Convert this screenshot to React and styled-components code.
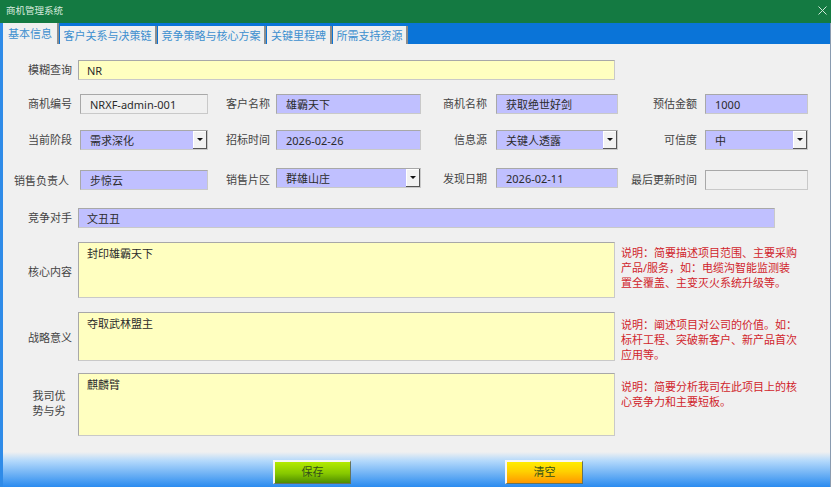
import React from 'react';
import styled, { createGlobalStyle } from 'styled-components';

const GlobalStyle = createGlobalStyle`
  html, body { margin: 0; padding: 0; }
  body {
    width: 831px;
    height: 487px;
    overflow: hidden;
    font-family: "Noto Sans", "Noto Sans CJK SC", sans-serif;
  }
`;

const Window = styled.div`
  width: 831px;
  height: 487px;
  display: flex;
  flex-direction: column;
  background: #f0f0f0;
`;

const TitleBar = styled.div`
  height: 23px;
  flex: none;
  display: flex;
  align-items: center;
  justify-content: space-between;
  padding: 0 3px 3px 6px;
  box-sizing: border-box;
  background: #147a42;
  color: #d8ebdf;
  font-size: 9.5px;
`;

const Frame = styled.div`
  flex: 1;
  display: flex;
  flex-direction: column;
  min-height: 0;
  border-left: 3px solid #2f8be8;
  border-right: 1px solid #8a9bb0;
`;

const TabStrip = styled.div`
  height: 21px;
  flex: none;
  display: flex;
  align-items: flex-end;
  gap: 1px;
  background: #0a74d8;
`;

const Tab = styled.div`
  height: ${p => (p.$active ? 21 : 18)}px;
  padding-bottom: ${p => (p.$active ? 2 : 0)}px;
  display: flex;
  align-items: center;
  justify-content: center;
  width: ${p => p.$width}px;
  box-sizing: border-box;
  background: #f0f0f0;
  color: #3d8fcf;
  font-size: 11px;
  border-right: 2px solid #8d8d8d;
  white-space: nowrap;
`;

const Content = styled.div`
  flex: 1;
  display: flex;
  flex-direction: column;
  padding-top: 16px;
  min-height: 0;
`;

const Row = styled.div`
  display: flex;
  align-items: flex-start;
  height: ${p => p.$height}px;
  margin-bottom: ${p => p.$gap}px;
`;

const Label = styled.div`
  width: ${p => p.$width}px;
  flex: none;
  height: 20px;
  margin-top: ${p => p.$top || 0}px;
  text-align: right;
  color: #444;
  font-size: 11px;
  line-height: 20px;
  white-space: nowrap;
`;

const StackLabel = styled(Label)`
  height: auto;
  margin-left: ${p => p.$left}px;
  line-height: 15px;
  white-space: normal;
  text-align: center;
`;

const Field = styled.div`
  position: relative;
  width: ${p => p.$width}px;
  height: ${p => p.$height || 20}px;
  margin-left: ${p => p.$left}px;
  margin-top: ${p => p.$top || 0}px;
  flex: none;
  box-sizing: border-box;
  padding: ${p => (p.$multi ? '3px 0 0 8px' : `0 0 0 ${p.$inset || 9}px`)};
  background: ${p => (p.$tone === 'yellow' ? '#ffffc0' : p.$tone === 'blue' ? '#c0c0ff' : '#f0f0f0')};
  border: 1px solid #c9c9c9;
  border-top-color: #a8a8a8;
  border-left-color: #a8a8a8;
  color: #2b2b2b;
  font-size: 11px;
  line-height: ${p => (p.$multi ? '15px' : '19px')};
  white-space: nowrap;
`;

const DropButton = styled.div`
  position: absolute;
  top: 0;
  right: 0;
  bottom: 0;
  width: 14px;
  display: flex;
  align-items: center;
  justify-content: center;
  background: #f2f2f2;
  border-right: 1px solid #555;
  border-bottom: 1px solid #555;
  box-shadow: inset 1px 1px 0 #fff;
  box-sizing: border-box;
`;

const Arrow = styled.span`
  width: 0;
  height: 0;
  border-left: 3px solid transparent;
  border-right: 3px solid transparent;
  border-top: 3px solid #111;
`;

const Hint = styled.div`
  width: 178px;
  margin-left: 6px;
  margin-top: ${p => p.$top || 0}px;
  color: #d0252c;
  font-size: 11px;
  line-height: 15px;
`;

const ButtonBar = styled.div`
  height: 35px;
  flex: none;
  margin-top: auto;
  display: flex;
  align-items: flex-start;
  padding-top: 8px;
  box-sizing: border-box;
  background: linear-gradient(#f0f0f0, #b4d9fb 25%, #2a8bef);
`;

const Button = styled.div`
  width: 78px;
  height: 24px;
  margin-left: ${p => p.$left}px;
  padding-bottom: 3px;
  flex: none;
  box-sizing: border-box;
  display: flex;
  align-items: center;
  justify-content: center;
  color: #33501a;
  font-size: 11px;
  background: ${p => (p.$tone === 'green'
    ? 'linear-gradient(#b4ea00, #86c800 55%, #4e8c00)'
    : 'linear-gradient(#ffec00, #ffd000 45%, #ff9800)')};
  border: 2px solid #f6f6f6;
  border-right: 1px solid #66735c;
  border-bottom: 1px solid #66735c;
`;

const Close = () => (
  <svg width="11" height="11" viewBox="0 0 11 11" fill="none" stroke="#cfe8d8" strokeWidth="1">
    <path d="M1.5 1.5l8 8M9.5 1.5l-8 8" />
  </svg>
);

const tabs = [
  { name: '基本信息', width: 56, active: true },
  { name: '客户关系与决策链', width: 97 },
  { name: '竞争策略与核心方案', width: 108 },
  { name: '关键里程碑', width: 65 },
  { name: '所需支持资源', width: 75 },
];

const Select = ({ children, ...rest }) => (
  <Field {...rest}>
    {children}
    <DropButton><Arrow /></DropButton>
  </Field>
);

export default function App() {
  return (
    <Window>
      <GlobalStyle />
      <TitleBar>
        <span>商机管理系统</span>
        <Close />
      </TitleBar>
      <Frame>
        <TabStrip>
          {tabs.map(t => (
            <Tab key={t.name} $active={t.active} $width={t.width}>{t.name}</Tab>
          ))}
        </TabStrip>
        <Content>
          <Row $height={20} $gap={14}>
            <Label $width={69}>模糊查询</Label>
            <Field $left={6} $width={537} $inset={8} $tone="yellow">NR</Field>
          </Row>
          <Row $height={20} $gap={16}>
            <Label $width={69}>商机编号</Label>
            <Field $left={8} $width={128}>NRXF-admin-001</Field>
            <Label $width={62}>客户名称</Label>
            <Field $left={6} $width={145} $tone="blue">雄霸天下</Field>
            <Label $width={66}>商机名称</Label>
            <Field $left={9} $width={122} $tone="blue">获取绝世好剑</Field>
            <Label $width={79}>预估金额</Label>
            <Field $left={8} $width={103} $tone="blue">1000</Field>
          </Row>
          <Row $height={20} $gap={18}>
            <Label $width={69}>当前阶段</Label>
            <Select $left={8} $width={128} $tone="blue">需求深化</Select>
            <Label $width={62}>招标时间</Label>
            <Field $left={6} $width={145} $tone="blue">2026-02-26</Field>
            <Label $width={66}>信息源</Label>
            <Select $left={9} $width={122} $tone="blue">关键人透露</Select>
            <Label $width={79}>可信度</Label>
            <Select $left={8} $width={103} $tone="blue">中</Select>
          </Row>
          <Row $height={22} $gap={18}>
            <Label $width={66} $top={3}>销售负责人</Label>
            <Field $left={11} $width={128} $top={2} $tone="blue">步惊云</Field>
            <Label $width={62} $top={2}>销售片区</Label>
            <Select $left={6} $width={145} $tone="blue">群雄山庄</Select>
            <Label $width={66} $top={1}>发现日期</Label>
            <Field $left={9} $width={122} $tone="blue">2026-02-11</Field>
            <Label $width={79} $top={2}>最后更新时间</Label>
            <Field $left={8} $width={103} $top={2} />
          </Row>
          <Row $height={20} $gap={14}>
            <Label $width={69}>竞争对手</Label>
            <Field $left={6} $width={697} $inset={8} $tone="blue">文丑丑</Field>
          </Row>
          <Row $height={56} $gap={14}>
            <Label $width={69} $top={20}>核心内容</Label>
            <Field $left={6} $width={537} $height={56} $multi $tone="yellow">封印雄霸天下</Field>
            <Hint $top={3}>说明：简要描述项目范围、主要采购产品/服务，如：电缆沟智能监测装置全覆盖、主变灭火系统升级等。</Hint>
          </Row>
          <Row $height={49} $gap={12}>
            <Label $width={69} $top={16}>战略意义</Label>
            <Field $left={6} $width={537} $height={49} $multi $tone="yellow">夺取武林盟主</Field>
            <Hint $top={5}>说明：阐述项目对公司的价值。如：标杆工程、突破新客户、新产品首次应用等。</Hint>
          </Row>
          <Row $height={63} $gap={0}>
            <StackLabel $left={28} $width={36} $top={15}>我司优势与劣</StackLabel>
            <Field $left={11} $width={537} $height={63} $multi $tone="yellow">麒麟臂</Field>
            <Hint $top={6}>说明：简要分析我司在此项目上的核心竞争力和主要短板。</Hint>
          </Row>
          <ButtonBar>
            <Button $left={270} $tone="green">保存</Button>
            <Button $left={154}>清空</Button>
          </ButtonBar>
        </Content>
      </Frame>
    </Window>
  );
}
